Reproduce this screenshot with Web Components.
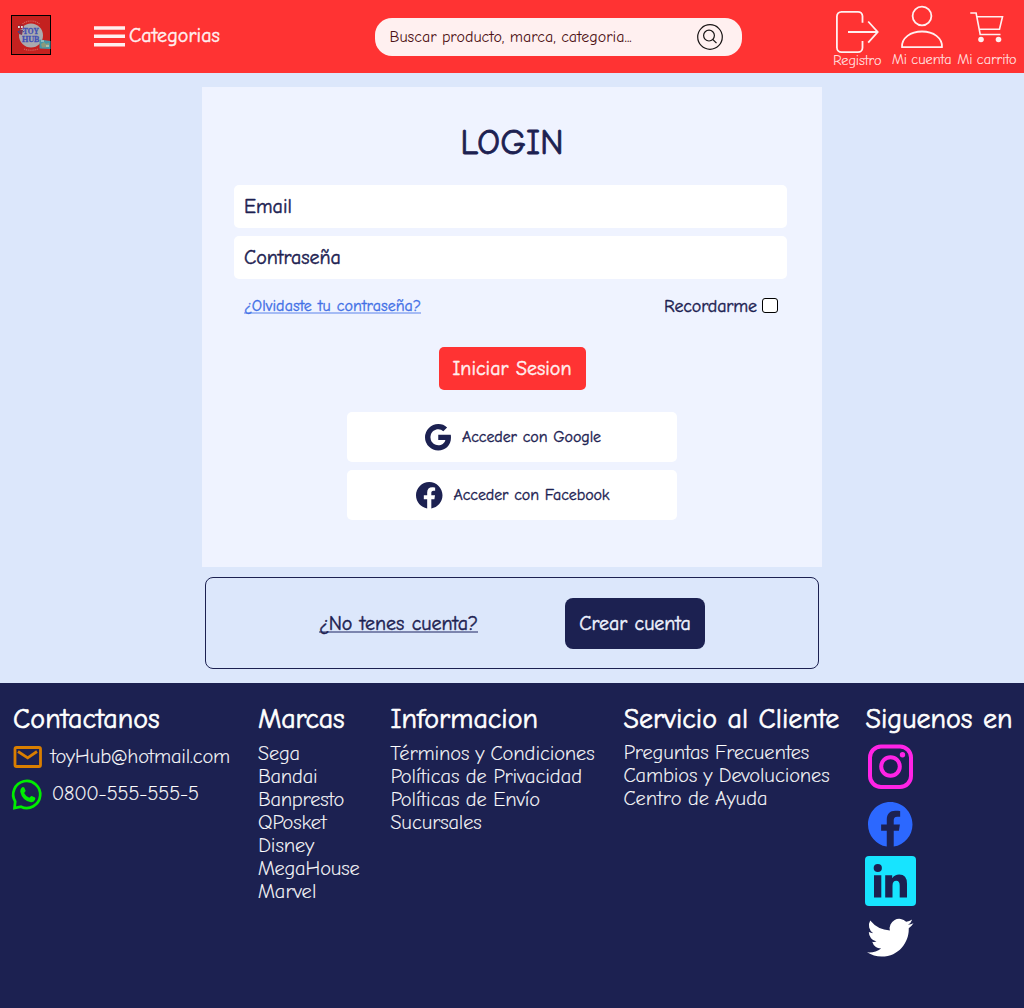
<!DOCTYPE html>
<html lang="es">
<head>
<meta charset="utf-8">
<title>Toy Hub - Login</title>
<style>
html,body{margin:0;padding:0}
body{background:#dce7fb;font-family:"Comic Neue",Lato,"Open Sans",sans-serif;font-size:20px;color:#1c2151}
</style>
</head>
<body>
<toy-app></toy-app>
<script>
const define=(name,html,after)=>customElements.define(name,class extends HTMLElement{
  connectedCallback(){
    if(this.shadowRoot)return;
    const t=document.createElement('template');
    t.innerHTML='<style>*{box-sizing:border-box}svg{display:block;overflow:visible;flex:none}</style>'+html;
    this.attachShadow({mode:'open'}).append(t.content.cloneNode(true));
    if(after)after(this);
  }
});

/* A line of text whose letters are spaced to fill the width given in "w"; "medium" and "light" set the stroke weight. */
define('fit-text',`<style>:host{display:inline-block;white-space:nowrap;flex:none}
:host([medium]){word-spacing:.04em;-webkit-text-stroke:.022em currentColor}
:host([light]){font-weight:300;-webkit-text-stroke:.012em currentColor}</style><span><slot></slot></span>`,el=>{
  const w=+el.getAttribute('w');
  const natural=el.shadowRoot.querySelector('span').getBoundingClientRect().width;
  el.style.letterSpacing=((w-natural)/el.textContent.length).toFixed(3)+'px';
  el.style.width=w+'px';
});

const ICONS={
facebook:'<path fill="currentColor" d="M16 8.049c0-4.446-3.582-8.05-8-8.05C3.58 0-.002 3.603-.002 8.05c0 4.017 2.926 7.347 6.75 7.951v-5.625h-2.03V8.05H6.75V6.275c0-2.017 1.195-3.131 3.022-3.131.876 0 1.791.157 1.791.157v1.98h-1.009c-.993 0-1.303.621-1.303 1.258v1.51h2.218l-.354 2.326H9.25V16c3.824-.604 6.75-3.934 6.75-7.951z"/>',
google:'<path fill="currentColor" d="M15.545 6.558a9.42 9.42 0 0 1 .139 1.626c0 2.434-.87 4.492-2.384 5.885h.002C11.978 15.292 10.158 16 8 16A8 8 0 1 1 8 0a7.689 7.689 0 0 1 5.352 2.082l-2.284 2.284A4.347 4.347 0 0 0 8 3.166c-2.087 0-3.86 1.408-4.492 3.304a4.792 4.792 0 0 0 0 3.063h.003c.635 1.893 2.405 3.301 4.492 3.301 1.078 0 2.004-.276 2.722-.764h-.003a3.702 3.702 0 0 0 1.599-2.431H8v-3.08h7.545z"/>',
twitter:'<path fill="currentColor" d="M5.026 15c6.038 0 9.341-5.003 9.341-9.334 0-.14 0-.282-.006-.422A6.685 6.685 0 0 0 16 3.542a6.658 6.658 0 0 1-1.889.518 3.301 3.301 0 0 0 1.447-1.817 6.533 6.533 0 0 1-2.087.793A3.286 3.286 0 0 0 7.875 6.03a9.325 9.325 0 0 1-6.767-3.429 3.289 3.289 0 0 0 1.018 4.382A3.323 3.323 0 0 1 .64 6.575v.045a3.288 3.288 0 0 0 2.632 3.218 3.203 3.203 0 0 1-.865.115 3.23 3.23 0 0 1-.614-.057 3.283 3.283 0 0 0 3.067 2.277A6.588 6.588 0 0 1 .78 13.58a6.32 6.32 0 0 1-.78-.045A9.344 9.344 0 0 0 5.026 15z"/>'};
define('brand-icon',`<style>:host{display:block;flex:none}</style><svg viewBox="0 0 16 16"></svg>`,el=>{
  const s=el.shadowRoot.querySelector('svg');
  s.innerHTML=ICONS[el.getAttribute('name')];
  s.setAttribute('width',el.getAttribute('size'));
  s.setAttribute('height',el.getAttribute('size'));
});

define('toy-logo',`<style>:host{display:block}</style>
<svg width="40" height="40" viewBox="0 0 40 40">
<rect x=".5" y=".5" width="39" height="39" fill="#c4211f" stroke="#000"/>
<circle cx="20" cy="20.500" r="12" fill="#aaaaae"/>
<path d="M11.500 8.800Q20 3.200 28.500 8.800M13 34Q20 36.500 27 34" fill="none" stroke="#d9827c" stroke-width="1.200" stroke-dasharray="1.100 .8" opacity=".7"/>
<path d="M6 11.500l2-2.300 4 .3 1 3-2.500 1.800L7 13.500z" fill="#a62230"/><path d="M7 11h1.800v2H7zM10 11h1.800v2H10z" fill="#ddd"/>
<path d="M8 14.500l4 .5-1 5-3-1z" fill="#7c3654"/><path d="M7 16l1.200 2M12 17l1.500-1" stroke="#2748a8"/>
<g font-family="Liberation Serif" font-weight="700" fill="#3f4fb4" stroke="#3f4fb4" stroke-width=".3"><text x="12" y="19.200" textLength="16" lengthAdjust="spacingAndGlyphs" font-size="8">TOY</text>
<text x="11" y="26.900" textLength="17.500" lengthAdjust="spacingAndGlyphs" font-size="8.400">HUB</text></g>
<path d="M28.500 24.500l11 1.500v8l-11-.5z" fill="#4696a8"/><path d="M30 29l3-2 2 2 3-1v4l-7 .5z" fill="#8a9a7c"/><path d="M30 26h3M35 31h3" stroke="#cfe0dc"/>
</svg>`);

define('toy-header',`<style>
:host{display:flex;align-items:flex-start;height:73px;background:#f33;color:#fff0f0}
toy-logo{margin:15px 0 0 11px}
.cat{display:flex;align-items:center;height:24px;margin:24px 0 0 43px;gap:4px;line-height:24px}
.search{display:flex;justify-content:space-between;align-items:center;width:367px;height:38px;border-radius:17px;background:#fff0f0;margin:18px 0 0 155px;padding:0 19px 0 14.500px;color:#4d1114;font-size:16px;line-height:20px}
.search svg{margin-top:-1px}
nav{display:flex;margin:0 0 0 91px;font-size:14px;line-height:18px}
nav div{display:flex;flex-direction:column;align-items:center;height:73px}
nav div:nth-child(2){margin-left:10.500px}nav div:nth-child(3){margin-left:6px}
</style>
<toy-logo></toy-logo>
<div class="cat"><svg width="31" height="21"><path d="M0 2h31M0 10.300h31M0 18.700h31" stroke="#fff0f0" stroke-width="3.600"/></svg><fit-text medium w="91">Categorias</fit-text></div>
<div class="search"><fit-text w="242.300">Buscar producto, marca, categoria...</fit-text>
<svg width="26" height="26" fill="none" stroke="#181414" stroke-width="1.200"><circle cx="13" cy="13" r="12.300"/><circle cx="12" cy="11.600" r="5.400"/><path d="M15.800 15.500l3.700 3.700"/></svg></div>
<nav>
<div><svg width="42" height="51" viewBox="0 0 42 51" fill="none" stroke="#fff0f0" stroke-width="1.800"><path d="M26.500 22.700V16a4.500 4.500 0 0 0-4.500-4.200H5.500A4.700 4.700 0 0 0 .9 16.500V47.500A4.700 4.700 0 0 0 5.500 52.200H22a4.500 4.500 0 0 0 4.500-4.500V41M12 32h29.500M32.200 21.500L41.700 32l-9.500 10.700"/></svg><fit-text light w="48.500" style="margin-top:1px">Registro</fit-text></div>
<div><svg width="42" height="51" fill="none" stroke="#fff0f0" stroke-width="1.800"><circle cx="21" cy="16" r="9.400"/><path d="M1 47.200C.5 38 9.500 31.500 21 31.500S41.500 38 41 47.200Z" stroke-linejoin="round"/></svg><fit-text light w="59.500">Mi cuenta</fit-text></div>
<div><svg width="34" height="51" fill="none" stroke="#fff0f0" stroke-width="1.600"><path d="M.3 13h5.800L10.200 34.500H30.500M7 16.700H32.500L29.500 29.200H9.200"/><g fill="#fff0f0" stroke="none"><circle cx="11" cy="39.500" r="2.800"/><circle cx="28.500" cy="39.500" r="2.800"/></g></svg><fit-text light w="59">Mi carrito</fit-text></div>
</nav>`);

define('toy-field',`<style>:host{display:flex;align-items:center;width:553px;height:43px;border-radius:5px;background:#fff;padding:0 10px;box-sizing:border-box}</style><slot></slot>`);
define('access-button',`<style>:host{display:flex;align-items:center;justify-content:center;gap:11px;width:330px;height:50px;border-radius:5px;background:#fff;font-size:16px;line-height:20px;box-sizing:border-box;padding-left:1.500px}</style><slot name="icon"></slot><slot></slot>`);
define('login-card',`<style>
:host{display:flex;flex-direction:column;align-items:center;width:620px;height:480px;background:#eff3ff}
h1{margin:34px 0 0;font-size:36px;line-height:43px;font-weight:400}
.fields{display:flex;flex-direction:column;gap:8px;margin:21px 3px 0 0}
.opts{display:flex;justify-content:space-between;align-items:center;width:536px;height:24px;margin:15px 0 0;padding:0 2px 0 0}
.opts a{color:#4270e6;font-size:16px;line-height:24px}
.opts a fit-text{text-decoration:underline 2px #a5bbf5;text-underline-offset:1px;text-decoration-skip-ink:none}
.rem{display:flex;align-items:center;gap:5px;font-size:18px}
.rem i{width:16px;height:15px;border:1px solid #000;border-radius:3px;background:#fff;margin-top:-1px}
button{font:inherit;color:#fff0f0;background:#f33;border:0;border-radius:5px;width:147px;height:43px;padding:0;margin:29px 0 22px}
.access{display:flex;flex-direction:column;gap:8px}
</style>
<h1><fit-text medium w="103.500">LOGIN</fit-text></h1>
<div class="fields"><toy-field><fit-text medium w="47.800">Email</fit-text></toy-field><toy-field><fit-text medium w="96.800">Contraseña</fit-text></toy-field></div>
<div class="opts"><a><fit-text medium w="177">¿Olvidaste tu contraseña?</fit-text></a><div class="rem"><fit-text medium w="93">Recordarme</fit-text><i></i></div></div>
<button><fit-text medium w="119">Iniciar Sesion</fit-text></button>
<div class="access">
<access-button><brand-icon slot="icon" name="google" size="26.500"></brand-icon><fit-text medium w="139">Acceder con Google</fit-text></access-button>
<access-button><brand-icon slot="icon" name="facebook" size="26.500"></brand-icon><fit-text medium w="156">Acceder con Facebook</fit-text></access-button>
</div>`);

define('signup-box',`<style>
:host{display:flex;align-items:center;width:614px;height:92px;border:1px solid #1c2151;border-radius:8px;box-sizing:border-box;padding-left:113px}
a fit-text{text-decoration:underline 2px #7c85ae;text-underline-offset:1px;text-decoration-skip-ink:none}
button{font:inherit;color:#eff3ff;background:#1c2151;border:0;border-radius:8px;width:140px;height:51px;padding:0;margin-left:87px}
</style><a><fit-text medium w="159">¿No tenes cuenta?</fit-text></a><button><fit-text medium w="111.300">Crear cuenta</fit-text></button>`);

define('footer-column',`<style>:host{display:flex;flex-direction:column;align-items:flex-start;flex:none;line-height:23px;color:#fff}
h2{margin:0 0 6px;font-size:28px;line-height:34px;font-weight:400}</style><h2><slot name="title"></slot></h2><slot></slot>`);

define('toy-footer',`<style>
:host{display:flex;align-items:flex-start;height:325px;background:#1c2151;padding:19px 0 0 13px}
.line{display:flex;align-items:center}
.line fit-text{margin:-2px 0 0 8px}
.social{display:flex;flex-direction:column;align-items:flex-start}
</style>
<footer-column style="width:245px"><fit-text medium slot="title" w="146.700">Contactanos</fit-text>
<div class="line" style="height:30px"><svg width="29" height="22" fill="none" stroke="#d97e00" stroke-width="2.800"><rect x="2" y="1.500" width="25.500" height="19" rx="1.500"/><path d="M5 5.500l9.700 6.300 9.300-6.300"/></svg><fit-text light w="179.500" style="margin-left:8.500px">toyHub@hotmail.com</fit-text></div>
<div class="line" style="height:30px;margin-top:7px"><svg width="31" height="31" viewBox="0 0 31 31"><path d="M2.200 22.500A13.500 13.500 0 1 1 8 27.700L1.500 29z" fill="none" stroke="#00ed00" stroke-width="2.700"/><path d="M9.100 8.200q1.300-.6 2.100.2l1.400 3.200q.2.700-1.500 2.300 1.700 3.400 5.200 4.800 1.800-2 2.500-1.700l3.200 1.600q.8.600-.1 2.300-1.300 2.500-4 2.300-8.700-1.500-10.700-10.700 0-2.800 1.900-4.300z" fill="#00ed00"/></svg><fit-text light w="147">0800-555-555-5</fit-text></div>
</footer-column>
<footer-column style="width:132.500px"><fit-text medium slot="title" w="86.500">Marcas</fit-text>
<fit-text light w="42">Sega</fit-text><fit-text light w="59.500">Bandai</fit-text><fit-text light w="86">Banpresto</fit-text><fit-text light w="68.500">QPosket</fit-text><fit-text light w="56">Disney</fit-text><fit-text light w="101.500">MegaHouse</fit-text><fit-text light w="58.500">Marvel</fit-text></footer-column>
<footer-column style="width:233px"><fit-text medium slot="title" w="147.500">Informacion</fit-text>
<fit-text light w="204">Términos y Condiciones</fit-text><fit-text light w="191.500">Políticas de Privacidad</fit-text><fit-text light w="149.500">Políticas de Envío</fit-text><fit-text light w="91">Sucursales</fit-text></footer-column>
<footer-column style="width:242px"><fit-text medium slot="title" w="215.700">Servicio al Cliente</fit-text>
<fit-text light w="185.500" style="margin-top:-1px">Preguntas Frecuentes</fit-text><fit-text light w="206">Cambios y Devoluciones</fit-text><fit-text light w="144">Centro de Ayuda</fit-text></footer-column>
<footer-column><fit-text medium slot="title" w="147">Siguenos en</fit-text>
<div class="social">
<svg width="45" height="45" style="margin:2px 0 0 2.500px" fill="none" stroke="#ff23e6" stroke-width="4"><rect x="2" y="2.500" width="41" height="40.500" rx="11"/><circle cx="22.500" cy="22.500" r="9.300"/><circle cx="34.500" cy="10.800" r="2.700" fill="#ff23e6" stroke="none"/></svg>
<brand-icon name="facebook" size="44.500" style="color:#2c68ff;margin:12.500px 0 0 2.900px"></brand-icon>
<svg width="51" height="50" style="margin:9.500px 0 0 -.5px"><rect width="51" height="50" rx="4" fill="#17e4ff"/><g fill="#1c2151"><circle cx="12.800" cy="12" r="4.100"/><path d="M9 19.200h7.300V41.500H9zM20.200 19.200h7v3q2.500-3.600 7-3.600 7.800 0 7.800 9.200V41.500h-7.300V29.500q0-4.700-3.400-4.700-3.800 0-3.800 5V41.500h-7.300z"/></g></svg>
<brand-icon name="twitter" size="46.500" style="color:#fff;margin:7px 0 0 1.500px"></brand-icon>
</div></footer-column>`);

define('toy-app',`<style>:host{display:flex;flex-direction:column;height:1008px;overflow:hidden}
main{display:flex;flex-direction:column;align-items:center;height:610px;padding-top:14px;gap:10px}</style>
<toy-header></toy-header><main><login-card></login-card><signup-box></signup-box></main><toy-footer></toy-footer>`);
</script>
</body>
</html>
